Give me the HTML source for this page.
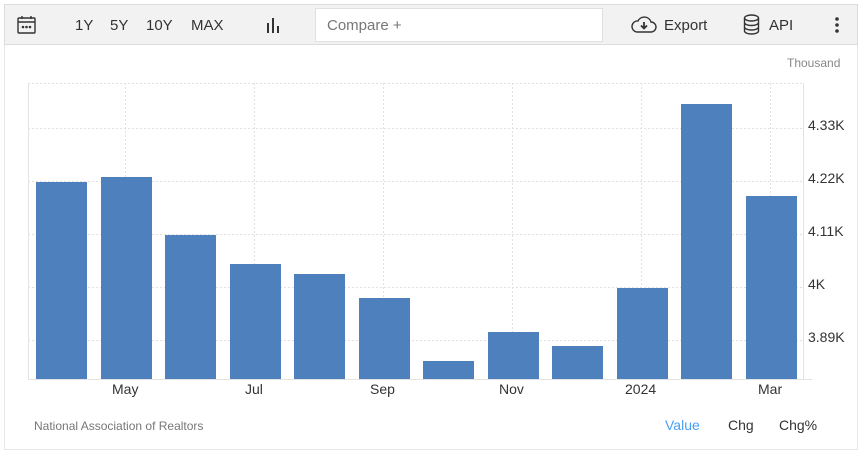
<!DOCTYPE html>
<html><head><style>
*{margin:0;padding:0;box-sizing:border-box}
body{width:859px;height:451px;background:#fff;font-family:"Liberation Sans",Arial,sans-serif;position:relative;overflow:hidden}
.box{position:absolute;left:4px;top:4px;width:854px;height:446px;border:1px solid #e6e6e6;border-top:none}
.tb{position:absolute;left:4px;top:4px;width:854px;height:41px;background:#f2f2f2;border:1px solid #dcdcdc}
.t{position:absolute;font-size:15px;color:#333;top:17px}
.cmp{position:absolute;left:315px;top:8px;width:288px;height:34px;background:#fff;border:1px solid #e0e0e0;font-size:15px;color:#777;padding:8px 11px}
.a{position:absolute;font-size:14px;color:#333}
.y{position:absolute;left:808px;font-size:14px;color:#333}
.bar{position:absolute;width:51px;background:#4d80bd;bottom:72px}
</style></head><body>
<div class="box"></div>
<div class="tb"></div>
<svg style="position:absolute;left:17px;top:15px" width="19" height="19" viewBox="0 0 19 19" fill="none" stroke="#333" stroke-width="1.4"><rect x="1" y="3" width="17" height="15" rx="1"/><line x1="1" y1="7" x2="18" y2="7"/><line x1="5" y1="1" x2="5" y2="4"/><line x1="14" y1="1" x2="14" y2="4"/><circle cx="6" cy="12" r=".6" fill="#333"/><circle cx="9.5" cy="12" r=".6" fill="#333"/><circle cx="13" cy="12" r=".6" fill="#333"/></svg>
<div class="t" style="left:75px">1Y</div>
<div class="t" style="left:110px">5Y</div>
<div class="t" style="left:146px">10Y</div>
<div class="t" style="left:191px">MAX</div>
<svg style="position:absolute;left:266px;top:17px" width="16" height="16"><rect x="1" y="6" width="2" height="10" fill="#333"/><rect x="6" y="1" width="2" height="15" fill="#333"/><rect x="11" y="9" width="2" height="7" fill="#333"/></svg>
<div class="cmp">Compare +</div>
<svg style="position:absolute;left:631px;top:15px" width="26" height="19" viewBox="0 0 26 19" fill="none" stroke="#333" stroke-width="1.4"><path d="M6 17H20a5 5 0 0 0 0-10 7 7 0 0 0-13-1 5.5 5.5 0 0 0-1 11z"/><path d="M13 7v6M10 10.5l3 3 3-3" stroke-width="1.8"/></svg>
<div class="t" style="left:664px">Export</div>
<svg style="position:absolute;left:743px;top:14px" width="17" height="21" viewBox="0 0 17 21" fill="none" stroke="#333" stroke-width="1.4"><ellipse cx="8.5" cy="4" rx="7" ry="3"/><path d="M1.5 4v13c0 1.7 3.1 3 7 3s7-1.3 7-3V4M1.5 8.5c0 1.7 3.1 3 7 3s7-1.3 7-3M1.5 13c0 1.7 3.1 3 7 3s7-1.3 7-3"/></svg>
<div class="t" style="left:769px">API</div>
<svg style="position:absolute;left:834px;top:16px" width="6" height="18"><circle cx="3" cy="3" r="1.8" fill="#333"/><circle cx="3" cy="9" r="1.8" fill="#333"/><circle cx="3" cy="15" r="1.8" fill="#333"/></svg>
<div style="position:absolute;left:787px;top:56px;font-size:12px;color:#888">Thousand</div>
<svg style="position:absolute;left:0;top:0" width="859" height="451">
<g stroke="#e0e0e0" stroke-dasharray="2,2" stroke-width="1">
<line x1="28" y1="83.5" x2="803" y2="83.5"/><line x1="28" y1="128.5" x2="803" y2="128.5"/><line x1="28" y1="181.5" x2="803" y2="181.5"/><line x1="28" y1="234.5" x2="803" y2="234.5"/><line x1="28" y1="287.5" x2="803" y2="287.5"/><line x1="28" y1="340.5" x2="803" y2="340.5"/>
<line x1="125.5" y1="83" x2="125.5" y2="379"/><line x1="254.5" y1="83" x2="254.5" y2="379"/><line x1="383.5" y1="83" x2="383.5" y2="379"/><line x1="512.5" y1="83" x2="512.5" y2="379"/><line x1="641.5" y1="83" x2="641.5" y2="379"/><line x1="770.5" y1="83" x2="770.5" y2="379"/>
</g>
<g stroke="#e3e3e3"><line x1="28.5" y1="83" x2="28.5" y2="380"/><line x1="803.5" y1="83" x2="803.5" y2="380"/><line x1="28" y1="379.5" x2="812" y2="379.5"/></g>
</svg>
<div class="bar" style="left:36px;height:197px"></div>
<div class="bar" style="left:101px;height:202px"></div>
<div class="bar" style="left:165px;height:144px"></div>
<div class="bar" style="left:230px;height:115px"></div>
<div class="bar" style="left:294px;height:105px"></div>
<div class="bar" style="left:359px;height:81px"></div>
<div class="bar" style="left:423px;height:18px"></div>
<div class="bar" style="left:488px;height:47px"></div>
<div class="bar" style="left:552px;height:33px"></div>
<div class="bar" style="left:617px;height:91px"></div>
<div class="bar" style="left:681px;height:275px"></div>
<div class="bar" style="left:746px;height:183px"></div>
<div class="y" style="top:117px">4.33K</div>
<div class="y" style="top:170px">4.22K</div>
<div class="y" style="top:223px">4.11K</div>
<div class="y" style="top:276px">4K</div>
<div class="y" style="top:329px">3.89K</div>
<div class="a" style="left:112px;top:381px">May</div>
<div class="a" style="left:245px;top:381px">Jul</div>
<div class="a" style="left:370px;top:381px">Sep</div>
<div class="a" style="left:499px;top:381px">Nov</div>
<div class="a" style="left:625px;top:381px">2024</div>
<div class="a" style="left:758px;top:381px">Mar</div>
<div style="position:absolute;left:34px;top:419px;font-size:12px;color:#777">National Association of Realtors</div>
<div style="position:absolute;left:665px;top:417px;font-size:14px;color:#4a9ff5">Value</div>
<div style="position:absolute;left:728px;top:417px;font-size:14px;color:#333">Chg</div>
<div style="position:absolute;left:779px;top:417px;font-size:14px;color:#333">Chg%</div>
</body></html>
